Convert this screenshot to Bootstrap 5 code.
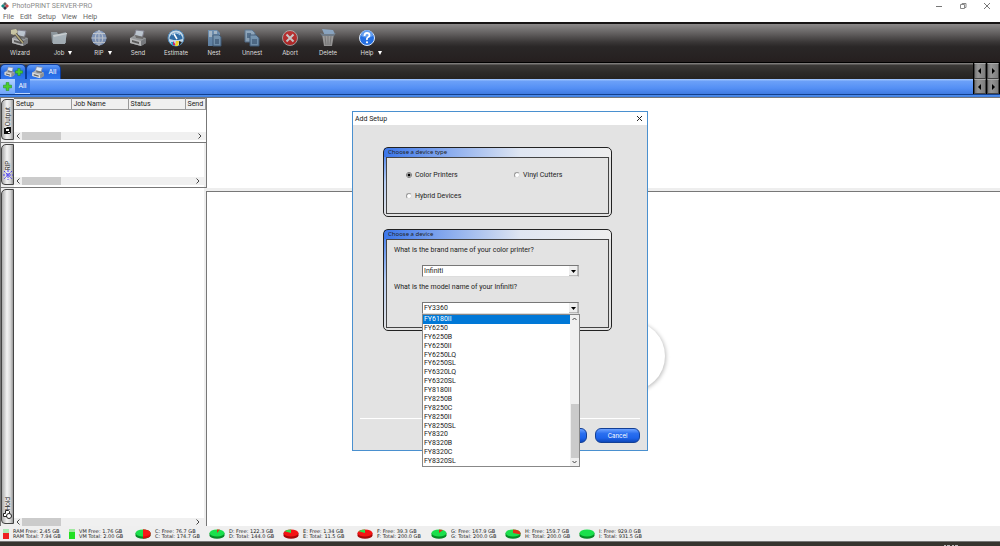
<!DOCTYPE html>
<html lang="en">
<head>
<meta charset="utf-8">
<meta name="viewport" content="width=device-width, initial-scale=1">
<title>PhotoPRINT SERVER-PRO</title>
<link href="https://cdn.jsdelivr.net/npm/bootstrap@5.3.0/dist/css/bootstrap.min.css" rel="stylesheet">
<style>
body{font:7px/10px Roboto,"Liberation Sans",sans-serif;color:#222;background:#fff}
button{border:0;background:none;padding:0;color:inherit;font:inherit;line-height:inherit}
svg{display:block}
.app-title{height:12px;color:#8a8a8a;padding:0 9px 0 1px;gap:3px}
.app-title .window-btns{gap:16px}
.app-menu{height:10px;color:#666}
.app-menu a{color:#666;text-decoration:none;padding:0 3px;line-height:10px}
.tool-bar{height:41px;padding:5px 1px 0;border-top:2px solid #161414;border-bottom:1px solid #000;background:linear-gradient(#8b8989,#625f5f 25%,#393636 48%,#2a2727 60%,#251f1f);color:#ddd;font:6px/8px Inter,"Liberation Sans",sans-serif}
.tool-btn{width:38px}
.tool-btn.has-menu{width:40px}
.tool-btn svg{width:18px;height:18px;margin:0 auto 2px;opacity:.75}
.tool-btn .icon-full{opacity:1}
.tool-label{display:grid;grid-template-columns:1fr auto 1fr}
.tool-label span{grid-column:2}
.tool-label i{width:0;height:0;margin:2px 0 0 4px;border:2px solid transparent;border-top:4px solid #fff;border-bottom:0}
.tab-strip{height:16px;background:linear-gradient(#8e8c8b,#3a3836 15%,#2c2a28 60%,#252321)}
.tab-strip .setup-tab{height:15px;margin-top:1px;border-radius:5px 5px 0 0;border:1px solid #0c3c9c;border-bottom:0;background:linear-gradient(#5f9af8,#2468e0 50%,#2f76f0);color:#fff}
.setup-tab.add-tab{width:26px}
.setup-tab.all-tab{width:35px}
.sub-strip{height:15px;background:linear-gradient(#a8cbff,#6ba0f8 15%,#5590f5 60%,#3f7ae0);color:#fff}
.sub-strip .plus-btn{width:15px;background:linear-gradient(#b4d2ff,#6ea4fa)}
.sub-strip .all-btn{width:15px;background:#3676e4;border-bottom:1px solid #bcd6ff}
.strip-edge{height:4px;background:linear-gradient(#123f8e 25%,#4d8cec 30%,#3f7fdf 75%,#777 80%)}
.pager button{width:12px;height:100%;background:linear-gradient(90deg,#777,#969696 30%,#7d7d7d);border:1px solid #444;border-top-color:#aaa}
.pager{gap:1px;background:#000;padding:0 1px}
.queues{width:206px;background:#eee;border-left:1px solid #777}
.queue{border-bottom:1px solid #777}
.queue-short{height:45px}
.side-tab{flex:none;width:13px;border:1px solid #444;border-radius:5px 0 0 4px;background:linear-gradient(90deg,#aaa,#f4f4f4 45%,#d9d9d9 75%,#999);margin:1px 0 2px}
.side-tab span{writing-mode:vertical-rl;transform:rotate(180deg);font:6px/8px Inter,sans-serif}
.queue-body{background:#fff}
.job-head{font:7px/9px Roboto,"Liberation Sans",sans-serif;table-layout:fixed;width:100%;background:#f0f0f0;color:#222}
.job-head th{font-weight:400;padding:1px 0 0 2px;border:1px solid #999;border-left:0;border-top-color:#777;white-space:nowrap}
.job-head .col-wide{width:57px}
.h-scroll{height:8px;background:#f0f0f0;color:#444;padding:0 2px;margin-bottom:2px}
.h-scroll button{width:6px}
.h-scroll i{width:39px;background:#cbcbcb}
.splitter{width:2px;background:#eee}
.view-pane{border-left:1px solid #777;background:#fff}
.view-top{height:90px}
.view-bottom{border-top:1px solid #777}
.pane-gap{height:3px;background:#eee}
.status-bar{height:15px;background:#efefef;font:5px/5px "DejaVu Sans",sans-serif;color:#222;padding:3px 3px 0}
.status-item{width:74px;gap:4px}
.status-item.memory{width:66px}
.status-item svg{flex:none}
.task-bar{height:5px;background:#36342e;border-top:1px solid #777;padding-right:40px}
.setup-dialog{top:111px;width:296px;height:340px;background:#e3e3e3;border:1px solid #4a90cf;z-index:5}
.dialog-head{height:13px;background:#fff;padding:0 4px 0 2px}
.device-group{width:229px;margin-left:30px;border:1px solid #222;border-radius:5px;background:linear-gradient(to right,#3b76ea,#dfe6f2 60%,#eee) top/100% 9px no-repeat,linear-gradient(#3b76ea,#b5cdf5 50%,#e3e3e3) left/3px 100% no-repeat,#e3e3e3;padding:0 2px 2px}
.device-group legend{float:left;width:100%;margin:0;padding:0 0 0 2px;font:6px/9px "Noto Sans",sans-serif}
.device-type{height:70px;margin-top:22px}
.device-model{height:102px;margin-top:12px}
.group-inner{clear:both;border:1px solid #444;background:#e3e3e3}
.device-type .group-inner{height:57px;padding:12px 0 0 19px;display:grid;grid-template-columns:108px 1fr;align-content:start;row-gap:11px}
.device-model .group-inner{height:89px;padding:6px 7px}
.device-opt{height:10px;gap:3px}
.device-opt input{appearance:none;width:6px;height:6px;margin:0;border:1px solid #999;border-right-color:#ddd;border-bottom-color:#ddd;border-radius:50%;background:#fff}
.device-opt input:checked{background:radial-gradient(circle,#000 1px,#fff 2px);border-color:#777}
.model-field label{display:block;line-height:8px;margin-bottom:11px}
.model-field{margin-bottom:6px}
.combo{display:block;width:157px;height:12px;margin-left:28px;border:1px solid #777;border-right-color:#aaa;border-bottom-color:#ddd;border-radius:0;appearance:none;font:7px/10px Roboto,sans-serif;color:#222;padding:0 0 0 1px;background:#fff url("data:image/svg+xml,%3Csvg xmlns='http://www.w3.org/2000/svg' width='9' height='10'%3E%3Cpath d='M0 0h9v10H0z' fill='%23eee'/%3E%3Cpath d='M0 10h9V0' fill='none' stroke='%23888'/%3E%3Cpath d='M2 4h5L4.500 7z'/%3E%3C/svg%3E") right center no-repeat}
.model-menu{left:69px;top:202px;width:158px;height:153px;border:1px solid #888;background:#fff;z-index:2}
.model-menu button{display:block;flex:1 1 0;min-height:0;text-align:left;padding-left:1px;line-height:9px}
.model-menu button.picked{background:#0078d7;color:#fff}
.v-scroll{width:9px;background:#f0f0f0}
.v-scroll i{height:54px;background:#cbcbcb;margin-top:auto;margin-left:1px}
.dialog-foot{margin:auto 7px 0;border-top:1px solid #fff;padding:9px 0 7px;gap:8px}
.glossy-btn{width:45px;height:15px;border:1px solid #123f96;border-radius:6px;background:linear-gradient(#6ca2ff,#2a6ff0 35%,#1d63ea 70%,#0f48ba);color:#fff;font:6px/12px Inter,sans-serif}
.busy-ring{left:calc(50% + 95px);top:321px;width:70px;height:70px;background:#fff;box-shadow:1px 1px 4px #bbb}
</style>
</head>
<body>
<svg width="0" height="0" class="position-absolute" aria-hidden="true"><defs>
<symbol id="printer" viewBox="0 0 18 18"><path d="M5 8l2-7 8 1-2 8z" fill="#dbe8f5" stroke="#889"/><path d="M1 9l5-3 11 3v5l-5 3L1 14z" fill="#b0b4b8"/><path d="M6 6l1 3 7 1 1-2z" fill="#777"/><path d="M1 9l11 3v5L1 14z" fill="#dcdee0"/><path d="M3 11l7 2v2l-7-2z" fill="#666"/><path d="M12 12l5-3v5l-5 3z" fill="#8b8f94"/></symbol>
<symbol id="cross-plus" viewBox="0 0 10 10"><path d="M3.500 .5h3v3h3v3h-3v3h-3v-3h-3v-3h3z" fill="#4bd02d" stroke="#1f8a1a" stroke-width=".6"/></symbol>
<symbol id="disk" viewBox="0 0 16 10"><path d="M.5 4v2.500a7.500 3.200 0 0 0 15 0V4z" fill="#078b26"/><ellipse cx="8" cy="4" rx="7.500" ry="3.500" fill="#1be04c"/></symbol>
<symbol id="disk-full" viewBox="0 0 16 10"><path d="M.5 4v2.500a7.500 3.200 0 0 0 15 0V4z" fill="#a80808"/><ellipse cx="8" cy="4" rx="7.500" ry="3.500" fill="#f51414"/><path d="M8 4L1.500 2.200Q4 .4 8 .5z" fill="#2de04c"/></symbol>
</defs></svg>

<div class="min-vh-100 d-flex flex-column position-relative overflow-hidden">
<header>
  <div class="app-title d-flex align-items-center">
    <svg width="8" height="8" viewBox="0 0 8 8"><path d="M4 0l2 2-2 2-2-2z" fill="#666"/><path d="M2 2l2 2-2 2-2-2z" fill="#168c86"/><path d="M6 2l2 2-2 2-2-2z" fill="#c44"/><path d="M4 4l2 2-2 2-2-2z" fill="#334"/></svg>
    <span>PhotoPRINT SERVER-PRO</span>
    <div class="window-btns ms-auto d-flex align-items-center">
      <button aria-label="Minimize"><svg width="8" height="8"><path d="M1 4.500h6" stroke="#777"/></svg></button>
      <button aria-label="Restore"><svg width="8" height="8" fill="none" stroke="#888"><path d="M1.500 2.500h4v4h-4zM3 2.500v-1h4v4H6"/></svg></button>
      <button aria-label="Close"><svg width="8" height="8"><path d="M1 1l6 6M7 1L1 7" stroke="#777"/></svg></button>
    </div>
  </div>
  <nav class="app-menu d-flex"><a href="#">File</a><a href="#">Edit</a><a href="#">Setup</a><a href="#">View</a><a href="#">Help</a></nav>
  <div class="tool-bar d-flex align-items-start">
    <button class="tool-btn"><svg viewBox="0 0 18 18"><use href="#printer"/><path d="M3 3l9 11" stroke="#444" stroke-width="3"/><path d="M3 3l9 11" stroke="#d8c98a" stroke-width="1.500"/><path d="M0 1l5-1 2 3-4 3-3-1z" fill="#e8e4b8"/></svg><span class="tool-label"><span>Wizard</span></span></button>
    <button class="tool-btn has-menu"><svg viewBox="0 0 18 18"><path d="M1 3h6l1 2 8-2v11H2z" fill="#9aa8b0"/><path d="M3 6l14-2-2 11H3z" fill="#c4d3dc"/><path d="M3 6l14-2v1L4 8z" fill="#eef5f8"/></svg><span class="tool-label"><span>Job</span><i></i></span></button>
    <button class="tool-btn has-menu"><svg viewBox="0 0 18 18"><circle cx="9" cy="9" r="7.500" fill="#8ca9d8"/><path d="M9 1.500v15M1.500 9h15M3 4.500h12M3 13.500h12M9 1.500c-5 4-5 11 0 15M9 1.500c5 4 5 11 0 15" fill="none" stroke="#dfe9f6"/></svg><span class="tool-label"><span>RIP</span><i></i></span></button>
    <button class="tool-btn"><svg viewBox="0 0 18 18"><use href="#printer"/></svg><span class="tool-label"><span>Send</span></span></button>
    <button class="tool-btn"><svg class="icon-full" viewBox="0 0 18 18"><circle cx="9" cy="9" r="8" fill="#c5d8e6" stroke="#4c88bb"/><path d="M2.500 10a6.500 6.500 0 0 1 13 0l-4 1-5 0z" fill="#2f6ca4"/><path d="M5 6q4-4 8 0" fill="none" stroke="#a8d0ee"/><path d="M7 5l3 5" stroke="#fff" stroke-width="1.500"/><path d="M4 13h3v3H5z" fill="#16a2c8"/><path d="M6 12l3 4H6z" fill="#c32273"/><path d="M9 12h3l-1 5H8z" fill="#efd227"/><path d="M12 12l3 1-3 4z" fill="#222"/></svg><span class="tool-label"><span>Estimate</span></span></button>
    <button class="tool-btn"><svg viewBox="0 0 18 18"><path d="M3 1h9l3 3v13H3z" fill="#6f9cc8"/><path d="M4 2h3v6H4zM9 2h3v3H9z" fill="#bad2e6"/><path d="M8 6h6l2 2v9H8z" fill="#83acd0" stroke="#41658a"/><path d="M10 10h4v5h-4z" fill="#53789d"/></svg><span class="tool-label"><span>Nest</span></span></button>
    <button class="tool-btn"><svg viewBox="0 0 18 18"><path d="M2 1h7l3 3v9H2z" fill="#9dbdd9" stroke="#56799b"/><path d="M4 4h4v5H4z" fill="#53789d"/><path d="M7 6h6l3 3v8H7z" fill="#83acd0" stroke="#41658a"/><path d="M9 10h5v5H9z" fill="#53789d"/></svg><span class="tool-label"><span>Unnest</span></span></button>
    <button class="tool-btn"><svg viewBox="0 0 18 18"><circle cx="9" cy="9" r="7.500" fill="#d42424" stroke="#bbb"/><path d="M5.500 5.500l7 7M12.500 5.500l-7 7" stroke="#eee" stroke-width="2"/></svg><span class="tool-label"><span>Abort</span></span></button>
    <button class="tool-btn"><svg viewBox="0 0 18 18"><path d="M3 5h12l-2 12H5z" fill="#b4b4b4"/><path d="M6 7l1 9M9 7v9M12 7l-1 9" stroke="#888"/><path d="M3 0l11 1 2 4-4 2H6z" fill="#95b9de"/><path d="M1 4l4 1h9l3-1-2 3H3z" fill="#789"/></svg><span class="tool-label"><span>Delete</span></span></button>
    <button class="tool-btn has-menu"><svg class="icon-full" viewBox="0 0 18 18"><circle cx="9" cy="9" r="7.500" fill="#246ee0" stroke="#dce9fa"/><path d="M3 7a6 6 0 0 1 12 0q-6 3-12 0z" fill="#649ff0"/><path d="M6.500 7q0-3 2.500-3t2.500 2.300q0 1.300-1.500 2T9 11" fill="none" stroke="#fff" stroke-width="1.800"/><circle cx="9" cy="13.300" r="1.100" fill="#fff"/></svg><span class="tool-label"><span>Help</span><i></i></span></button>
  </div>
  <div class="tab-strip d-flex">
    <button class="setup-tab add-tab d-flex align-items-center justify-content-center" aria-label="Add setup"><svg width="11" height="12"><use href="#printer"/></svg><svg width="8" height="8"><use href="#cross-plus"/></svg></button>
    <button class="setup-tab all-tab d-flex align-items-center justify-content-center gap-1"><svg width="14" height="13"><use href="#printer"/></svg>All</button>
    <div class="pager d-flex ms-auto"><button aria-label="Previous tab"><svg width="10" height="10"><path d="M6 2v6L3 5z"/></svg></button><button aria-label="Next tab"><svg width="10" height="10"><path d="M4 2v6l3-3z"/></svg></button></div>
  </div>
  <div class="sub-strip d-flex">
    <button class="plus-btn d-flex align-items-center justify-content-center" aria-label="Add"><svg width="9" height="9"><use href="#cross-plus"/></svg></button>
    <button class="all-btn">All</button>
    <div class="pager d-flex ms-auto"><button aria-label="Scroll left"><svg width="10" height="10"><path d="M6 2v6L3 5z"/></svg></button><button aria-label="Scroll right"><svg width="10" height="10"><path d="M4 2v6l3-3z"/></svg></button></div>
  </div>
  <div class="strip-edge"></div>
</header>

<main class="d-flex flex-fill">
  <aside class="queues d-flex flex-column flex-shrink-0">
    <section class="queue queue-short d-flex">
      <button class="side-tab d-flex flex-column align-items-center justify-content-end pb-1"><span>Output</span><svg width="9" height="9" viewBox="0 0 9 9"><path d="M1 2h2l1-1h4v6l-2 1H1z" fill="#111"/><path d="M3 3h3v2H3zM5 6h2v1H5z" fill="#fff"/></svg></button>
      <div class="queue-body flex-fill d-flex flex-column">
        <table class="job-head"><colgroup><col class="col-wide"><col class="col-wide"><col class="col-wide"><col></colgroup><thead><tr><th>Setup</th><th>Job Name</th><th>Status</th><th>Send</th></tr></thead></table>
        <div class="h-scroll d-flex mt-auto"><button aria-label="Scroll left"><svg width="4" height="6" fill="none" stroke="#444"><path d="M3.500 .5L1 3l2.500 2.500"/></svg></button><i></i><button class="ms-auto" aria-label="Scroll right"><svg width="4" height="6" fill="none" stroke="#444"><path d="M.5 .5L3 3L.5 5.500"/></svg></button></div>
      </div><div class="splitter"></div>
    </section>
    <section class="queue queue-short d-flex">
      <button class="side-tab d-flex flex-column align-items-center justify-content-end pb-1"><span>RIP</span><svg width="10" height="10" viewBox="0 0 10 10"><path d="M5 0v10M0 5h10M1 1l8 8M9 1L1 9" stroke="#4b3df0" stroke-dasharray="2 1"/></svg></button>
      <div class="queue-body flex-fill d-flex flex-column">
        <div class="h-scroll d-flex mt-auto"><button aria-label="Scroll left"><svg width="4" height="6" fill="none" stroke="#444"><path d="M3.500 .5L1 3l2.500 2.500"/></svg></button><i></i><button class="ms-auto" aria-label="Scroll right"><svg width="4" height="6" fill="none" stroke="#444"><path d="M.5 .5L3 3L.5 5.500"/></svg></button></div>
      </div><div class="splitter"></div>
    </section>
    <section class="d-flex flex-fill">
      <button class="side-tab d-flex flex-column align-items-center justify-content-end pb-1"><span>Hold</span><svg width="9" height="9" viewBox="0 0 9 9" fill="#fff" stroke="#222"><path d="M.5 3.500h2v-3h3l1 1v5h-6z"/><circle cx="6" cy="6" r="2.500"/></svg></button>
      <div class="queue-body flex-fill d-flex flex-column">
        <div class="h-scroll d-flex mt-auto mb-0"><button aria-label="Scroll left"><svg width="4" height="6" fill="none" stroke="#444"><path d="M3.500 .5L1 3l2.500 2.500"/></svg></button><i></i><button class="ms-auto" aria-label="Scroll right"><svg width="4" height="6" fill="none" stroke="#444"><path d="M.5 .5L3 3L.5 5.500"/></svg></button></div>
      </div><div class="splitter"></div>
    </section>
  </aside>
  <div class="flex-fill d-flex flex-column">
    <div class="view-pane view-top"></div><div class="pane-gap"></div><div class="view-pane view-bottom flex-fill"></div>
  </div>
</main>

<footer class="status-bar d-flex">
  <div class="status-item memory d-flex"><svg width="6" height="11"><path d="M0 0h6v4H0z" fill="#a8e8b4"/><path d="M0 4h6v6H0z" fill="#ee2222"/></svg><div>RAM Free: 2.45 GB<br>RAM Total: 7.94 GB</div></div>
  <div class="status-item memory d-flex"><svg width="6" height="11"><path d="M0 0h6v3H0z" fill="#a0e8a0"/><path d="M0 3h6v7H0z" fill="#22e022"/></svg><div>VM Free: 1.76 GB<br>VM Total: 2.00 GB</div></div>
  <div class="status-item d-flex"><svg width="16" height="10"><use href="#disk"/><path d="M8 .5A7.500 3.500 0 0 1 15.500 4v2.500Q15 9 8 9.700z" fill="#d80c0c"/><path d="M8 .5a7.500 3.500 0 0 1 0 7z" fill="#f71818"/></svg><div>C: Free: 76.7 GB<br>C: Total: 174.7 GB</div></div>
  <div class="status-item d-flex"><svg width="16" height="10"><use href="#disk"/><path d="M8 4V.5h3z" fill="#e03018"/></svg><div>D: Free: 122.3 GB<br>D: Total: 144.0 GB</div></div>
  <div class="status-item d-flex"><svg width="16" height="10"><use href="#disk-full"/></svg><div>E: Free: 1.34 GB<br>E: Total: 11.5 GB</div></div>
  <div class="status-item d-flex"><svg width="16" height="10"><use href="#disk-full"/></svg><div>F: Free: 39.3 GB<br>F: Total: 200.0 GB</div></div>
  <div class="status-item d-flex"><svg width="16" height="10"><use href="#disk"/><path d="M8 4V.5q3 0 4 .6z" fill="#e03018"/></svg><div>G: Free: 167.9 GB<br>G: Total: 200.0 GB</div></div>
  <div class="status-item d-flex"><svg width="16" height="10"><use href="#disk"/><path d="M8 4V.5A7.500 3.500 0 0 1 15.500 4v1.500z" fill="#e03018"/></svg><div>H: Free: 159.7 GB<br>H: Total: 200.0 GB</div></div>
  <div class="status-item d-flex"><svg width="16" height="10"><use href="#disk"/></svg><div>I: Free: 929.0 GB<br>I: Total: 931.5 GB</div></div>
</footer>
<div class="task-bar d-flex justify-content-end align-items-end"><svg width="16" height="1" aria-hidden="true"><path d="M0 .5h16" stroke="#bbb" stroke-dasharray="2 1 3 2"/></svg></div>

<div class="busy-ring position-absolute rounded-circle"></div>
<form class="setup-dialog position-absolute start-50 translate-middle-x d-flex flex-column" role="dialog" aria-labelledby="dlg-title">
  <div class="dialog-head d-flex align-items-center justify-content-between"><span id="dlg-title">Add Setup</span><button type="button" aria-label="Close"><svg width="7" height="7"><path d="M1 1l5 5M6 1L1 6" stroke="#222"/></svg></button></div>
  <fieldset class="device-group device-type">
    <legend>Choose a device type</legend>
    <div class="group-inner">
      <label class="device-opt d-flex align-items-center"><input type="radio" name="type" checked>Color Printers</label>
      <label class="device-opt d-flex align-items-center"><input type="radio" name="type">Vinyl Cutters</label>
      <label class="device-opt d-flex align-items-center"><input type="radio" name="type">Hybrid Devices</label>
    </div>
  </fieldset>
  <fieldset class="device-group device-model">
    <legend>Choose a device</legend>
    <div class="group-inner">
      <div class="model-field"><label for="brand">What is the brand name of your color printer?</label><select id="brand" class="combo"><option>Infiniti</option></select></div>
      <div class="model-field"><label for="model">What is the model name of your Infiniti?</label><select id="model" class="combo"><option>FY3360</option></select></div>
    </div>
  </fieldset>
  <div class="model-menu position-absolute d-flex">
    <div class="flex-fill d-flex flex-column" role="listbox" aria-label="Models">
      <button type="button" role="option" class="picked">FY6180II</button><button type="button" role="option">FY6250</button><button type="button" role="option">FY6250B</button><button type="button" role="option">FY6250II</button><button type="button" role="option">FY6250LQ</button><button type="button" role="option">FY6250SL</button><button type="button" role="option">FY6320LQ</button><button type="button" role="option">FY6320SL</button><button type="button" role="option">FY8180II</button><button type="button" role="option">FY8250B</button><button type="button" role="option">FY8250C</button><button type="button" role="option">FY8250II</button><button type="button" role="option">FY8250SL</button><button type="button" role="option">FY8320</button><button type="button" role="option">FY8320B</button><button type="button" role="option">FY8320C</button><button type="button" role="option">FY8320SL</button>
    </div>
    <div class="v-scroll d-flex flex-column"><svg width="9" height="8" fill="none" stroke="#444"><path d="M2.500 5l2-2 2 2"/></svg><i></i><svg width="9" height="8" fill="none" stroke="#444"><path d="M2.500 3l2 2 2-2"/></svg></div>
  </div>
  <div class="dialog-foot d-flex justify-content-end"><button type="button" class="glossy-btn">Next</button><button type="button" class="glossy-btn">Cancel</button></div>
</form>
</div>
<script src="https://cdn.jsdelivr.net/npm/bootstrap@5.3.0/dist/js/bootstrap.bundle.min.js"></script>
</body>
</html>
